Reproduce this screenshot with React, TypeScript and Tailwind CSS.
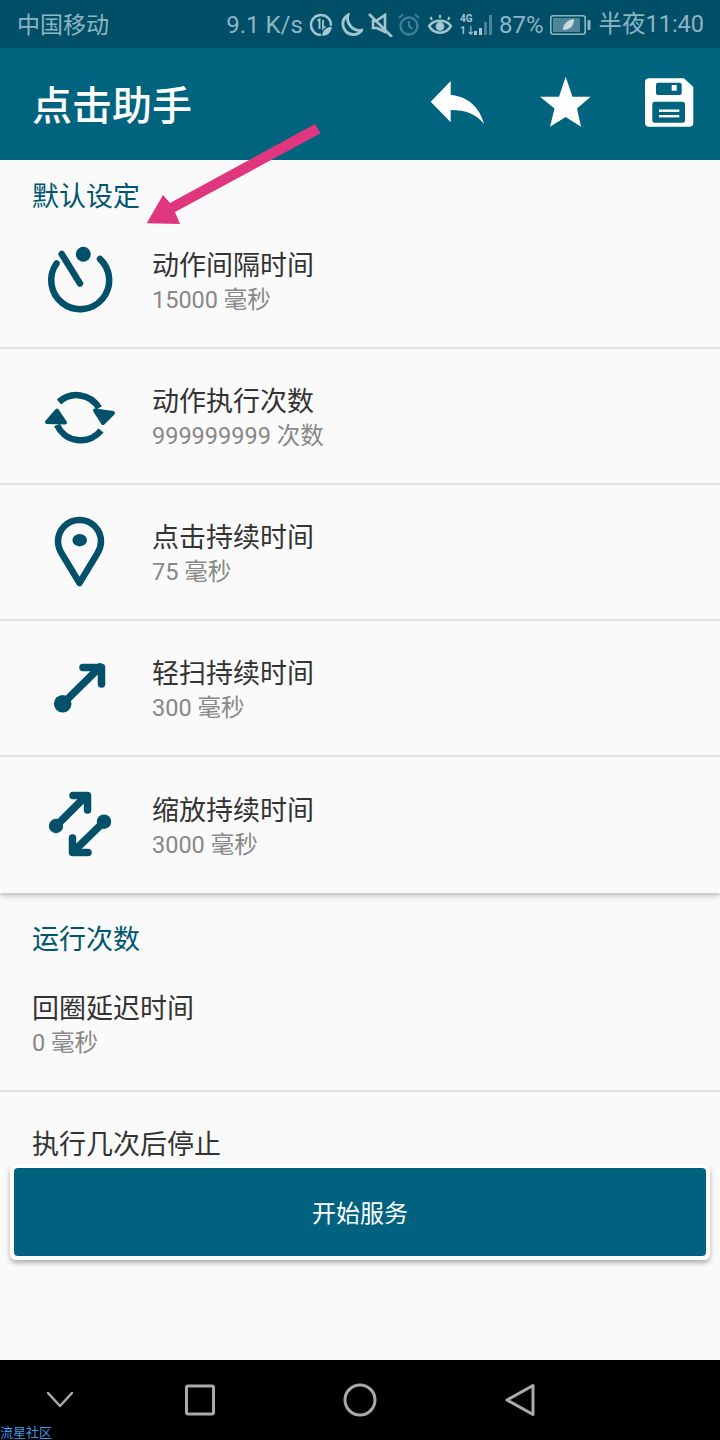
import React from 'react';

const cjk = { fontFamily: 'Roboto, "Noto Sans CJK SC", sans-serif' };
const teal = '#02506a';

const TimerIcon = () => (
  <svg width="80" height="80" viewBox="0 0 80 80" fill="none" stroke={teal} strokeWidth="6.5" strokeLinecap="round">
    <path d="M16.5 22.5A29 29 0 1 0 60 18" />
    <path d="M21.7 13L40 42.5" />
    <circle cx="43.3" cy="13.3" r="7.5" fill={teal} stroke="none" />
  </svg>
);

const SyncIcon = () => (
  <svg width="80" height="80" viewBox="0 0 80 80" fill="none" stroke={teal} strokeWidth="6.5" strokeLinecap="butt" strokeLinejoin="round">
    <path d="M19 25A26 26 0 0 1 59 31" />
    <path d="M17 48A26 26 0 0 0 61 53.5" />
    <path d="M55 33.5L73 36L63 46Z" fill={teal} strokeWidth="4" />
    <path d="M7 45L17 33.5L25 45.5Z" fill={teal} strokeWidth="4" />
  </svg>
);

const PinIcon = () => (
  <svg width="80" height="80" viewBox="0 0 80 80" fill="none" stroke={teal} strokeWidth="6.5" strokeLinejoin="round">
    <path d="M39.5 70L22 41C19.5 37 18 33 18 28.5A21.5 21.5 0 0 1 61 28.5C61 33 59.5 37 57 41Z" />
    <ellipse cx="39.7" cy="27.2" rx="7.2" ry="6.2" fill={teal} stroke="none" />
  </svg>
);

const SwipeIcon = () => (
  <svg width="80" height="80" viewBox="0 0 80 80" fill="none" stroke={teal} strokeWidth="7.5" strokeLinecap="round" strokeLinejoin="round">
    <circle cx="22.7" cy="54.8" r="8.8" fill={teal} stroke="none" />
    <path d="M22.7 54.8L60 18" />
    <path d="M43 18.5H61.5V35" />
  </svg>
);

const PinchIcon = () => (
  <svg width="80" height="80" viewBox="0 0 80 80" fill="none" stroke={teal} strokeWidth="7.5" strokeLinecap="round" strokeLinejoin="round">
    <circle cx="16" cy="40" r="7.2" fill={teal} stroke="none" />
    <path d="M16 40L46 10" />
    <path d="M33 9.5H47.5V24" />
    <circle cx="64" cy="35.7" r="7.2" fill={teal} stroke="none" />
    <path d="M64 35.7L33 66" />
    <path d="M32.5 52V66.5H48" />
  </svg>
);

const rows = [
  { title: '动作间隔时间', sub: '15000 毫秒', icon: TimerIcon },
  { title: '动作执行次数', sub: '999999999 次数', icon: SyncIcon },
  { title: '点击持续时间', sub: '75 毫秒', icon: PinIcon },
  { title: '轻扫持续时间', sub: '300 毫秒', icon: SwipeIcon },
  { title: '缩放持续时间', sub: '3000 毫秒', icon: PinchIcon },
];

const StatusBar = () => (
  <div className="flex h-12 items-center bg-[#004e67] pl-[17px] pr-[16px] pt-[2px] text-[24px] leading-none text-[#8db5c4]" style={cjk}>
    <span className="text-[23px]">中国移动</span>
    <span className="ml-auto">9.1 K/s</span>
    {/* data saver */}
    <svg className="ml-[6px]" width="24" height="24" viewBox="0 0 24 24" fill="none" stroke="#a3c6d2" strokeWidth="2.4">
      <circle cx="12" cy="12" r="10" />
      <path d="M8.5 7.5L10.5 6.5V16" strokeWidth="2" />
      <path d="M14 7V16L16.5 13.5" strokeWidth="1.8" />
      <path d="M12.5 23.5C12.5 17 17 13 23.5 13C23.5 19.5 19.5 23.5 12.5 23.5Z" fill="#a3c6d2" stroke="#004e67" strokeWidth="1.2" />
    </svg>
    {/* moon */}
    <svg className="ml-[6px]" width="24" height="24" viewBox="0 0 24 24" fill="none" stroke="#a3c6d2" strokeWidth="2.8">
      <path d="M9 2A10.5 10.5 0 1 0 23 17C14.5 19 6.5 10.5 9 2Z" />
    </svg>
    {/* muted speaker */}
    <svg className="ml-[5px]" width="25" height="24" viewBox="0 0 25 24" fill="none" stroke="#a3c6d2" strokeWidth="2.6">
      <path d="M5 8H8L17 2V19L9 15H5Z" />
      <path d="M1 1L24 24" />
    </svg>
    {/* alarm, dimmed */}
    <svg className="ml-[5px]" width="22" height="24" viewBox="0 0 22 24" fill="none" stroke="#3f7f97" strokeWidth="2.4">
      <circle cx="11" cy="13" r="8.5" />
      <path d="M11 8V13L14.5 16M1 5L5 1.5M21 5L17 1.5" strokeWidth="2" />
    </svg>
    {/* eye comfort */}
    <svg className="ml-[8px]" width="24" height="24" viewBox="0 0 24 24" fill="none" stroke="#a3c6d2" strokeWidth="2.6">
      <path d="M1 13C6 6 18 6 23 13C18 22 6 22 1 13Z" />
      <circle cx="12" cy="13.5" r="4.4" fill="#a3c6d2" stroke="none" />
      <path d="M4 7L2.5 4M12 5V2M20 7L21.5 4" strokeWidth="2" />
    </svg>
    {/* 4G signal */}
    <div className="relative ml-[8px] h-[24px] w-[34px] text-[#a3c6d2]">
      <span className="absolute left-0 top-[0px] text-[10px] font-bold leading-[12px]">4G</span>
      <span className="absolute left-0 top-[12px] text-[10px] font-bold leading-[12px]">1↓</span>
      <svg className="absolute left-[12px] top-0" width="22" height="24" viewBox="0 0 22 24" fill="#a3c6d2">
        <rect x="2" y="18" width="3" height="4" />
        <rect x="7" y="15" width="3" height="7" />
        <rect x="12" y="9" width="3" height="13" opacity="0.45" />
        <rect x="17" y="2" width="3" height="20" opacity="0.45" />
      </svg>
    </div>
    <span className="ml-[5px]">87%</span>
    {/* battery */}
    <svg className="ml-[7px]" width="41" height="20" viewBox="0 0 41 20" fill="none">
      <rect x="0.8" y="0.8" width="34.4" height="18.4" rx="2.5" stroke="#8db5c4" strokeWidth="1.6" />
      <rect x="3" y="3" width="27" height="14" fill="#4f8499" />
      <rect x="37.5" y="5" width="3" height="10" rx="1" fill="#8db5c4" />
      <path d="M13 15C13 9 17 5 24 4C24 11 20 15 13 15Z" fill="#c8dbe2" />
    </svg>
    <span className="ml-[7px] text-[23.5px]">半夜11:40</span>
  </div>
);

const AppBar = () => (
  <div className="flex h-[112px] items-center bg-[#00647f] pl-[32px]">
    <h1 className="pt-[6px] text-[40px] font-medium leading-none text-white" style={cjk}>点击助手</h1>
    <svg className="ml-auto" width="60" height="60" viewBox="0 0 60 60" fill="white">
      <path d="M2.7 27.7L22.7 7V21C40 22 52 34 56 50C48 40 38 36 22.7 36V48.3Z" />
    </svg>
    <svg className="ml-[48px]" width="60" height="60" viewBox="0 0 60 60" fill="white">
      <path d="M29.7 2.7L36.5 22.7H54.7L41 34.5L45 52.7L29.7 43L14 52.7L18.5 34.5L4 22.7H23Z" />
    </svg>
    <svg className="ml-[43px] mr-[21px]" width="60" height="60" viewBox="0 0 60 60">
      <path d="M10 4.3H45L54.3 13V48.7A4 4 0 0 1 50.3 52.7H10A4 4 0 0 1 6 48.7V8.3A4 4 0 0 1 10 4.3Z" fill="white" />
      <rect x="17" y="8.7" width="25.7" height="12.3" rx="2" fill="#00647f" />
      <rect x="32.7" y="11" width="5" height="5.7" fill="white" />
      <rect x="13.3" y="27.7" width="32.7" height="21" rx="2.5" fill="#00647f" />
      <rect x="20" y="35.5" width="20.3" height="2.4" fill="white" />
      <rect x="20" y="41" width="20.3" height="2.4" fill="white" />
    </svg>
  </div>
);

const App: React.FC = () => {
  return (
    <div className="relative flex h-[1440px] w-[720px] flex-col overflow-hidden bg-[#fafafa]" style={cjk}>
      <StatusBar />
      <AppBar />

      <div className="relative flex-1 overflow-hidden">
        {/* Default settings */}
        <div className="bg-[#fafafa] shadow-[0_2px_6px_rgba(0,0,0,0.3)]">
          <div className="flex h-[53px] items-center pl-[32px] pt-[21px] text-[27px] leading-none text-[#00566e]">默认设定</div>
          {rows.map((row, i) => (
            <div key={i} className={`flex h-[136px] items-center ${i < rows.length - 1 ? 'border-b-2 border-[#e0e0e0]' : ''}`}>
              <div className="w-[152px] shrink-0 pl-[40px] pt-[2px]">
                <row.icon />
              </div>
              <div className="pt-[5px]">
                <div className="text-[27px] leading-[34px] text-[#333333]">{row.title}</div>
                <div className="text-[23.5px] leading-[34px] text-[#888888]">{row.sub}</div>
              </div>
            </div>
          ))}
        </div>

        {/* Run count */}
        <div className="mt-[8px] flex h-[58px] items-center pl-[32px] pt-[20px] text-[27px] leading-none text-[#00566e]">运行次数</div>
        <div className="flex h-[133px] flex-col justify-center border-b-2 border-[#e0e0e0] px-[32px] pt-[4px]">
          <div className="text-[27px] leading-[34px] text-[#333333]">回圈延迟时间</div>
          <div className="text-[23.5px] leading-[35px] text-[#888888]">0 毫秒</div>
        </div>
        <div className="px-[32px] pt-[36px] text-[27px] leading-[34px] text-[#333333]">执行几次后停止</div>

        {/* Start button */}
        <div className="absolute bottom-[100px] left-[10px] right-[10px] rounded-md bg-white p-[4px] shadow-[0_3px_5px_rgba(0,0,0,0.3)]">
          <div className="flex h-[88px] items-center justify-center rounded-sm bg-[#00627f] pt-[3px] text-[24px] text-white">开始服务</div>
        </div>
      </div>

      {/* Nav bar */}
      <div className="relative flex h-20 items-center bg-black pl-[40px]">
        <svg width="40" height="40" viewBox="0 0 40 40" fill="none" stroke="#aaaaaa" strokeWidth="2.5" strokeLinecap="round" strokeLinejoin="round">
          <path d="M8 13L20 26L32 13" />
        </svg>
        <svg className="ml-[100px]" width="40" height="40" viewBox="0 0 40 40" fill="none" stroke="#aaaaaa" strokeWidth="3" strokeLinejoin="round">
          <rect x="6.5" y="6" width="27" height="28" rx="1.5" />
        </svg>
        <svg className="ml-[120px]" width="40" height="40" viewBox="0 0 40 40" fill="none" stroke="#aaaaaa" strokeWidth="3">
          <circle cx="20" cy="20" r="15" />
        </svg>
        <svg className="ml-[120px]" width="40" height="40" viewBox="0 0 40 40" fill="none" stroke="#aaaaaa" strokeWidth="3" strokeLinejoin="round">
          <path d="M33 5.5V34.5L7 20Z" />
        </svg>
        <span className="absolute bottom-0 left-0 text-[13px] leading-[14px] text-[#3d9be8]">流星社区</span>
      </div>

      {/* Annotation arrow */}
      <svg className="absolute left-[140px] top-[120px]" width="190" height="110" viewBox="0 0 190 110">
        <path d="M175 4L180.7 13.3L35 92L40 104L6.7 103.3L23 75L30 83Z" fill="#e0367f" />
      </svg>
    </div>
  );
};

export default App;
